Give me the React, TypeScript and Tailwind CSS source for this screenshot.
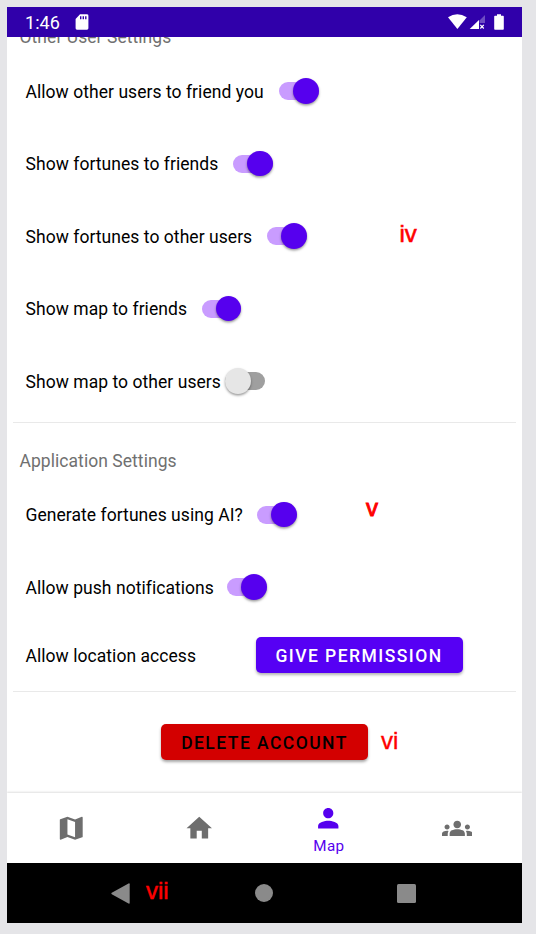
import type { ReactNode } from "react";

function Toggle({ on = true }: { on?: boolean }) {
  return (
    <div
      className={`-mt-[0.5px] flex h-[18px] w-[39.5px] shrink-0 items-center rounded-full ${
        on ? "justify-end bg-[#c99cff]" : "justify-start bg-[#9f9f9f]"
      }`}
    >
      <div
        className={`size-[25.5px] shrink-0 rounded-full shadow-[0_1.5px_2.5px_rgba(0,0,0,0.4)] ${
          on ? "bg-[#5600ee]" : "bg-[#e6e6e6]"
        }`}
      />
    </div>
  );
}

function Row({ label, width, on }: { label: string; width: string; on?: boolean }) {
  return (
    <div className="flex h-[72.5px] items-center pl-[18.5px]">
      <span className={`shrink-0 pt-px whitespace-nowrap ${width}`}>{label}</span>
      <Toggle on={on} />
    </div>
  );
}

function Tab({ path, label }: { path: string; label?: string }) {
  return (
    <div className={`flex flex-1 flex-col items-center ${label ? "pt-[10px] text-[#5600ee]" : "pt-[20px] text-[#6e6e6e]"}`}>
      <svg viewBox="0 0 24 24" className="-ml-px size-[30.5px]" fill="currentColor">
        <path d={path} />
      </svg>
      {label && <span className="mt-[2px] text-[15.2px] leading-5 tracking-[0.4px]">{label}</span>}
    </div>
  );
}

function Note({ place, children }: { place: string; children: ReactNode }) {
  return (
    <span
      className={`absolute font-['Liberation_Sans',sans-serif] text-[24px] leading-[28px] text-[#ff0000] ${place}`}
    >
      {children}
    </span>
  );
}

const MAP = "M20.5 3l-.16.03L15 5.1 9 3 3.36 4.9c-.21.07-.36.25-.36.48V20.5c0 .28.22.5.5.5l.16-.03L9 18.9l6 2.1 5.64-1.9c.21-.07.36-.25.36-.48V3.5c0-.28-.22-.5-.5-.5zM15 19l-6-2.11V5l6 2.11V19z";
const HOME = "M10 20v-6h4v6h5v-8h3L12 3 2 12h3v8z";
const PERSON = "M12 12c2.21 0 4-1.79 4-4s-1.79-4-4-4-4 1.79-4 4 1.79 4 4 4zm0 2c-2.67 0-8 1.34-8 4v2h16v-2c0-2.66-5.33-4-8-4z";
const GROUPS = "M12 12.75c1.63 0 3.07.39 4.24.9 1.08.48 1.76 1.56 1.76 2.73V18H6v-1.61c0-1.18.68-2.26 1.76-2.73 1.17-.52 2.61-.91 4.24-.91zM4 13c1.1 0 2-.9 2-2s-.9-2-2-2-2 .9-2 2 .9 2 2 2zm1.13 1.1c-.37-.06-.74-.1-1.13-.1-.99 0-1.93.21-2.78.58C.48 14.9 0 15.62 0 16.43V18h4.5v-1.61c0-.83.23-1.61.63-2.29zM20 13c1.1 0 2-.9 2-2s-.9-2-2-2-2 .9-2 2 .9 2 2 2zm4 3.43c0-.81-.48-1.53-1.22-1.85-.85-.37-1.79-.58-2.78-.58-.39 0-.76.04-1.13.1.4.68.63 1.46.63 2.29V18H24v-1.57zM12 6c1.66 0 3 1.34 3 3s-1.34 3-3 3-3-1.34-3-3 1.34-3 3-3z";

export default function App() {
  return (
    <div className="relative h-[934px] w-[536px] overflow-hidden bg-[#e5e5e8] p-[7px] font-[Roboto,sans-serif]">
      <div className="flex h-[916px] w-[515px] flex-col overflow-hidden bg-white text-[17.5px] tracking-[0.05px] text-black">
        <header className="z-10 flex h-[30px] shrink-0 items-center bg-[#3000aa] pl-[18px] text-white">
          <span className="w-[50px] pt-px text-[18px] leading-[29px]">1:46</span>
          <svg viewBox="0 0 14 16" className="h-4 w-[14px]">
            <path fill="#fff" fillRule="evenodd" d="M5 .3h7A1.4 1.4 0 0 1 13.4 2v12.3a1.4 1.4 0 0 1-1.4 1.4H2a1.4 1.4 0 0 1-1.4-1.4V5zM5 2.2v3h1.4v-3zm2.6 0v3H9v-3zm2.5 0v3h1.4v-3z" />
          </svg>
          <svg viewBox="0 0 58 18" className="ml-[358px] h-[18px] w-[58px]" fill="#fff">
            <path d="M1 4.2Q10.2-1.9 19.8 4.2L10.4 16z" />
            <path opacity=".3" d="M38 2v8h-5.5V7.5z" />
            <path d="M22.7 16 32 7v9z" />
            <path d="m33.3 11.8 3.5 3.7m0-3.7-3.5 3.7" stroke="#fff" strokeWidth="1.2" />
            <path d="M50 1.2h4v1.5h2q.8 0 .8.8v12.4q0 .8-.8.8h-8q-.8 0-.8-.8V3.5q0-.8.8-.8h2z" />
          </svg>
        </header>

        <main className="flex h-[756px] shrink-0 flex-col">
          <h2 className="-mt-[12px] h-[30px] pl-[12.5px] leading-[24px] text-[#707070]">Other User Settings</h2>
          <Row label="Allow other users to friend you" width="w-[253.5px]" />
          <Row label="Show fortunes to friends" width="w-[207.5px]" />
          <Row label="Show fortunes to other users" width="w-[241.5px]" />
          <Row label="Show map to friends" width="w-[176px]" />
          <Row label="Show map to other users" width="w-[199.5px]" on={false} />
          <div className="mx-[6px] mt-[4px] h-px shrink-0 bg-[#e9e9e9]" />
          <h2 className="h-[56px] pt-[26px] pl-[12.5px] leading-[24px] text-[#707070]">Application Settings</h2>
          <Row label="Generate fortunes using AI?" width="w-[231.5px]" />
          <Row label="Allow push notifications" width="w-[201.5px]" />
          <div className="flex h-[67px] shrink-0 items-center pb-[4px] pl-[18.5px]">
            <span className="w-[230px] pt-[2px]">Allow location access</span>
            <button className="h-[36px] w-[207px] rounded-[5px] bg-[#5600f4] pt-[2px] text-[17.5px] font-medium tracking-[1.45px] text-white shadow-[0_2px_3px_rgba(0,0,0,0.3)]">
              GIVE PERMISSION
            </button>
          </div>
          <div className="mx-[6px] h-px shrink-0 bg-[#e9e9e9]" />
          <div className="flex justify-center pt-[32.5px]">
            <button className="h-[36px] w-[207px] rounded-[5px] bg-[#d30000] pt-[2px] text-[17.5px] font-medium tracking-[1.45px] text-black shadow-[0_2px_3px_rgba(0,0,0,0.35)]">
              DELETE ACCOUNT
            </button>
          </div>
        </main>

        <nav className="flex h-[70px] shrink-0 bg-white shadow-[0_-1px_2px_rgba(0,0,0,0.13)]">
          <Tab path={MAP} />
          <Tab path={HOME} />
          <Tab path={PERSON} label="Map" />
          <Tab path={GROUPS} />
        </nav>

        <footer className="flex h-[60px] shrink-0 items-center bg-black pl-[104px]">
          <svg viewBox="0 0 19 21" className="h-[21px] w-[19px]">
            <path fill="#8a8a8a" d="M.8 9.8 17.5.5q1.2-.5 1.2.8v18.4q0 1.3-1.2.8L.8 11.2q-.9-.7 0-1.4z" />
          </svg>
          <div className="ml-[125px] size-[18px] rounded-full bg-[#8a8a8a]" />
          <div className="ml-[124px] size-[19px] rounded-[1.5px] bg-[#8a8a8a]" />
        </footer>
      </div>

      <Note place="left-[399.5px] top-[220px] [-webkit-text-stroke:0.6px_#ff0000]">iv</Note>
      <Note place="left-[366px] top-[494px] [-webkit-text-stroke:0.9px_#ff0000]">v</Note>
      <Note place="left-[381px] top-[727px] [-webkit-text-stroke:0.4px_#ff0000]">vi</Note>
      <Note place="left-[146px] top-[877px] [-webkit-text-stroke:0.5px_#ff0000]">vii</Note>
    </div>
  );
}
